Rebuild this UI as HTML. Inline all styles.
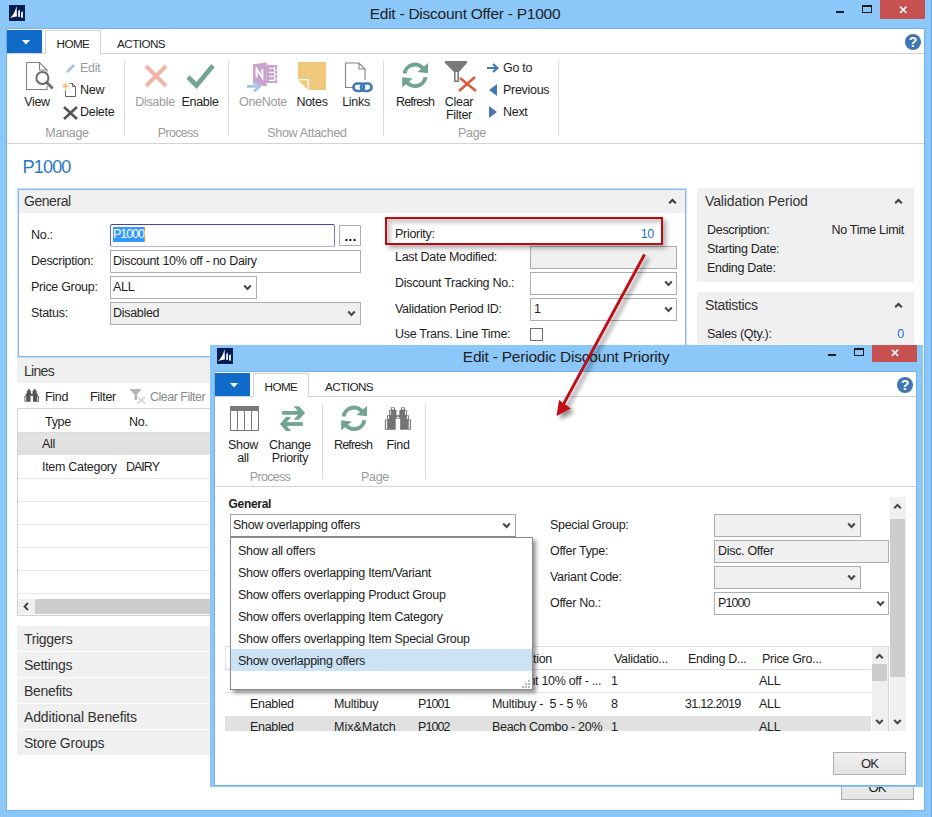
<!DOCTYPE html>
<html lang="en">
<head>
<meta charset="utf-8">
<title>Edit - Discount Offer - P1000</title>
<style>
html,body{margin:0;padding:0;}
body{width:932px;height:817px;overflow:hidden;background:#8bc7f9;position:relative;font-family:"Liberation Sans",sans-serif;font-size:12px;color:#1e1e1e;}
.a{position:absolute;}
.t{position:absolute;white-space:nowrap;line-height:16px;font-size:12.5px;color:#1e1e1e;letter-spacing:-0.3px;}
.c{transform:translateX(-50%);text-align:center;}
.r{transform:translateX(-100%);}
.g{color:#9a9a9a;}
.h{font-size:14px;color:#333;letter-spacing:-0.45px;}
.tb{font-size:11.7px;letter-spacing:-0.55px;}
.bl{color:#2b78bf;}
.bv{color:#1e6ec8;}
.in{position:absolute;box-sizing:border-box;border:1px solid #abadb3;background:#fff;}
.ro{background:#f0f0f0;}
.sep{position:absolute;width:1px;background:#d9d9d9;}
.hl{position:absolute;height:1px;background:#d4d4d4;}
.pn{position:absolute;background:#f0f0f0;}
svg{position:absolute;overflow:visible;}
</style>
</head>
<body>
<div class="a" style="left:931px;top:0;width:1px;height:817px;background:#6aa6de;"></div>
<div class="a" style="left:6px;top:28px;width:919px;height:783px;background:#74b1e8;"></div>
<div class="a" style="left:7px;top:29px;width:917px;height:781px;background:#fff;"></div>

<!-- outer_title -->
<!-- outer title bar -->
<svg style="left:9px;top:5px" width="16" height="16" viewBox="0 0 16 16"><rect width="16" height="16" fill="#001d50"/><path d="M7.6 0.9 L7.9 11.5 Q4.5 11.6 1 13 Q5.6 9 7.6 0.9 Z M9.2 6.2 Q10 5 10.8 4.4 L10.9 11.9 L9.1 11.7 Z M12.1 7.6 Q13 6.6 13.8 6 L13.9 12.8 L12 12.5 Z" fill="#fff"/></svg>
<div class="t c" style="left:465px;top:5px;font-size:15.5px;line-height:18px;letter-spacing:-0.25px;color:#1e1e1e;">Edit - Discount Offer - P1000</div>
<div class="a" style="left:836px;top:11px;width:8px;height:2px;background:#1a1a1a;"></div>
<div class="a" style="left:862px;top:5px;width:10px;height:8px;box-sizing:border-box;border:1px solid #1a1a1a;border-top-width:2px;"></div>
<div class="a" style="left:880px;top:0;width:45px;height:19px;background:#c75050;"></div>
<svg style="left:898.7px;top:5.6px" width="8.5" height="7.6" viewBox="0 0 9 9"><path d="M0.7 0.7 L8.3 8.3 M8.3 0.7 L0.7 8.3" stroke="#fff" stroke-width="1.9" fill="none"/></svg>
<!-- tabs -->
<div class="a" style="left:7px;top:30px;width:35px;height:23px;background:#106ac7;"></div>
<svg style="left:22px;top:40px" width="8" height="4.6" viewBox="0 0 9 5"><path d="M0 0 L9 0 L4.5 5 Z" fill="#fff"/></svg>
<div class="hl" style="left:7px;top:53px;width:917px;"></div>
<div class="a" style="left:45px;top:30px;width:56px;height:24px;box-sizing:border-box;border:1px solid #d4d4d4;border-bottom:none;background:#fff;"></div>
<div class="t tb" style="left:56.5px;top:35.5px;">HOME</div>
<div class="t tb" style="left:117px;top:35.5px;">ACTIONS</div>
<svg style="left:905px;top:34px" width="16" height="16" viewBox="0 0 16 16"><circle cx="8" cy="8" r="8" fill="#3f76b3"/><text x="8" y="12.6" font-family="Liberation Sans,sans-serif" font-weight="bold" font-size="14" fill="#fff" text-anchor="middle">?</text></svg>

<!-- outer_ribbon -->
<div class="hl" style="left:7px;top:143px;width:917px;"></div>
<!-- View -->
<svg style="left:25px;top:62px" width="29" height="29" viewBox="0 0 29 29"><path d="M1.5 0.5 H14.5 L22 8 V10.5 M14.5 0.5 V8 H22 M1.5 0.5 V27.5 H22 V24" fill="none" stroke="#828282" stroke-width="1.1"/><circle cx="17.4" cy="16" r="6" fill="#fff" stroke="#6a6a6a" stroke-width="2"/><path d="M21.8 20.6 L27.6 26.4" stroke="#6a6a6a" stroke-width="2.8" fill="none"/></svg>
<div class="t c" style="left:37px;top:94px;">View</div>
<!-- Edit / New / Delete -->
<svg style="left:65px;top:63px" width="11" height="11" viewBox="0 0 11 11"><path d="M1 10 L2 7 L8 1 L10 3 L4 9 Z" fill="#a9c4e4"/></svg>
<div class="t g" style="left:80px;top:60px;">Edit</div>
<svg style="left:62px;top:82px" width="15" height="16" viewBox="0 0 15 16"><path d="M7.5 1.5 H10.5 L13.5 4.5 V14.5 H3.5 V8.5 M10.5 1.5 V4.5 H13.5" fill="none" stroke="#666" stroke-width="1"/><path d="M3.5 0.5 V7.5 M0 4 H7 M1.1 1.6 L5.9 6.4 M5.9 1.6 L1.1 6.4" stroke="#eaa94b" stroke-width="0.8"/></svg>
<div class="t" style="left:80px;top:82px;">New</div>
<svg style="left:62.5px;top:105.5px" width="15" height="14" viewBox="0 0 15 14"><path d="M1 1 L14 13 M14 1 L1 13" stroke="#555" stroke-width="2.6" fill="none"/></svg>
<div class="t" style="left:80px;top:104px;">Delete</div>
<div class="t c g" style="left:67px;top:125px;">Manage</div>
<div class="sep" style="left:124px;top:61px;height:75px;"></div>
<!-- Disable / Enable -->
<svg style="left:144px;top:64px" width="24" height="24" viewBox="0 0 24 24"><path d="M2 2 L22 22 M22 2 L2 22" stroke="#f0b3a6" stroke-width="4" fill="none"/></svg>
<div class="t c g" style="left:155px;top:94px;">Disable</div>
<svg style="left:186px;top:63px" width="29" height="26" viewBox="0 0 29 26"><path d="M2 14 L10.5 22.5 L27 2.5" stroke="#71a491" stroke-width="4.6" fill="none"/></svg>
<div class="t c" style="left:200px;top:94px;">Enable</div>
<div class="t c g" style="left:178px;top:125px;letter-spacing:-0.7px;">Process</div>
<div class="sep" style="left:228px;top:61px;height:75px;"></div>
<!-- OneNote / Notes / Links -->
<svg style="left:247px;top:61px" width="32" height="31" viewBox="0 0 32 31"><path d="M19.4 4 H30.2 V22 H19.4 Z" fill="#c9a3cc"/><path d="M22 7.4 H27 M22 11.4 H27 M22 15.4 H27 M22 19.4 H27" stroke="#fff" stroke-width="1.3"/><path d="M27.6 5.5 V20.5" stroke="#fff" stroke-width="1"/><path d="M28.2 9 H30.4 M28.2 13.4 H30.4 M28.2 17.8 H30.4" stroke="#fff" stroke-width="1"/><path d="M6 3.3 L19.6 1.2 V25.4 L6 23 Z" fill="#c9a3cc"/><path d="M9.6 16.6 V8 L15.4 16.6 V8" stroke="#fff" stroke-width="1.9" fill="none"/><path d="M0 25.4 H10.5 M7 20.6 L12.6 25.4 L7 30.2" stroke="#a9c4e2" stroke-width="2.6" fill="none"/></svg>
<div class="t c g" style="left:263px;top:94px;">OneNote</div>
<svg style="left:298px;top:62px" width="28" height="28" viewBox="0 0 28 28"><path d="M0 0 H28 V28 H10 L0 18 Z" fill="#f0c87c"/><path d="M0 17.7 H10.3 V28" fill="none" stroke="#fff" stroke-width="1.3"/></svg>
<div class="t c" style="left:312px;top:94px;">Notes</div>
<svg style="left:344px;top:62px" width="30" height="30" viewBox="0 0 30 30"><path d="M1.5 1 L15 1 L21 7 L21 18 M15 1 L15 7 L21 7 M1.5 1 L1.5 25.5 L9 25.5" fill="none" stroke="#828282" stroke-width="1.1"/><rect x="9.5" y="21.5" width="10.5" height="7.5" rx="3.7" fill="none" stroke="#3f7ab8" stroke-width="2.7"/><rect x="17" y="21.5" width="10.5" height="7.5" rx="3.7" fill="none" stroke="#3f7ab8" stroke-width="2.7"/></svg>
<div class="t c" style="left:356px;top:94px;">Links</div>
<div class="t c g" style="left:307px;top:125px;">Show Attached</div>
<div class="sep" style="left:383px;top:61px;height:75px;"></div>
<!-- Refresh -->
<svg style="left:401px;top:62px" width="28" height="27" viewBox="0 0 28 27"><path d="M3.5 11.5 A10.5 10.5 0 0 1 23.1 8.05" fill="none" stroke="#71a491" stroke-width="3.9"/><path d="M27 1 V11.3 L16.5 9.9 Z" fill="#71a491"/><path d="M24.5 15.1 A10.5 10.5 0 0 1 4.9 18.55" fill="none" stroke="#71a491" stroke-width="3.9"/><path d="M1.2 15.2 V25.5 L11.8 16.6 Z" fill="#71a491"/></svg>
<div class="t c" style="left:415px;top:94px;letter-spacing:-0.8px;">Refresh</div>
<!-- Clear filter -->
<svg style="left:445px;top:61px" width="32" height="31" viewBox="0 0 32 31"><path d="M0 0 L22 0 L22 2 L14 11 L14 21 L9 21 L9 11 L0 2 Z" fill="#7a7a7a"/><path d="M10.6 11 L12.4 11 L12.4 19.5 L10.6 19.5 Z" fill="#fff"/><path d="M15 17 L31 30 M30 16 L14 30" stroke="#db5b40" stroke-width="2.6" fill="none"/></svg>
<div class="t c" style="left:459px;top:94px;line-height:13px;top:96px;">Clear<br>Filter</div>
<!-- Go to / Previous / Next -->
<svg style="left:487px;top:63px" width="12" height="10" viewBox="0 0 12 10"><path d="M0 5 L10 5 M6 1 L10.5 5 L6 9" stroke="#4279b6" stroke-width="2.2" fill="none"/></svg>
<div class="t" style="left:503px;top:60px;">Go to</div>
<svg style="left:489px;top:84px" width="8" height="12" viewBox="0 0 8 12"><path d="M8 0 L8 12 L0 6 Z" fill="#4279b6"/></svg>
<div class="t" style="left:503px;top:82px;">Previous</div>
<svg style="left:489px;top:106px" width="8" height="12" viewBox="0 0 8 12"><path d="M0 0 L0 12 L8 6 Z" fill="#4279b6"/></svg>
<div class="t" style="left:503px;top:104px;">Next</div>
<div class="t c g" style="left:472px;top:125px;">Page</div>
<div class="sep" style="left:558px;top:61px;height:75px;"></div>

<!-- outer_body -->
<div class="t bl" style="left:22.5px;top:156px;font-size:18px;line-height:22px;letter-spacing:-0.8px;">P1000</div>
<!-- General fasttab -->
<div class="a" style="left:18px;top:189px;width:668px;height:168px;box-sizing:border-box;border:1px solid #8cb4f8;background:#fff;box-shadow:0 0 0 1px #c6dcfb;"></div>
<div class="pn" style="left:19px;top:190px;width:666px;height:23px;"></div>
<div class="t h" style="left:24px;top:192px;line-height:18px;">General</div>
<svg style="left:668px;top:198px" width="9" height="6" viewBox="0 0 9 6"><path d="M1.2 5.3 L4.5 2 L7.8 5.3" stroke="#3a3a3a" stroke-width="2.1" fill="none"/></svg>
<!-- left column -->
<div class="t" style="left:31px;top:227px;">No.:</div>
<div class="t" style="left:31px;top:253px;">Description:</div>
<div class="t" style="left:31px;top:279px;">Price Group:</div>
<div class="t" style="left:31px;top:305px;">Status:</div>
<div class="in" style="left:110px;top:224px;width:225px;height:23px;border-color:#4644a4 #7c7ac4 #b4b2e2 #6462b4;border-radius:2px;"></div>
<div class="t" style="left:113px;top:227px;background:#3399ff;color:#fff;height:15px;line-height:15px;letter-spacing:-1.05px;border-right:1px solid #e8902a;">P1000</div>
<div class="in" style="left:339px;top:225px;width:22px;height:21px;"></div>
<div class="t" style="left:344.5px;top:229px;font-weight:bold;letter-spacing:0.5px;color:#000;font-size:13px;">...</div>
<div class="in" style="left:110px;top:250px;width:251px;height:23px;"></div>
<div class="t" style="left:113px;top:253px;">Discount 10% off - no Dairy</div>
<div class="in" style="left:110px;top:276px;width:147px;height:23px;"></div>
<div class="t" style="left:113px;top:279px;">ALL</div>
<svg style="left:243px;top:284px" width="9" height="7" viewBox="0 0 9 7"><path d="M1.2 1.6 L4.5 5 L7.8 1.6" stroke="#484848" stroke-width="2.1" fill="none"/></svg>
<div class="in ro" style="left:110px;top:302px;width:251px;height:23px;"></div>
<div class="t" style="left:113px;top:305px;">Disabled</div>
<svg style="left:347px;top:310px" width="9" height="7" viewBox="0 0 9 7"><path d="M1.2 1.6 L4.5 5 L7.8 1.6" stroke="#484848" stroke-width="2.1" fill="none"/></svg>
<!-- right column -->
<div class="t" style="left:395px;top:226px;">Priority:</div>
<div class="t r bv" style="left:654px;top:226px;">10</div>
<div class="t" style="left:395px;top:249px;">Last Date Modified:</div>
<div class="t" style="left:395px;top:275px;">Discount Tracking No.:</div>
<div class="t" style="left:395px;top:301px;">Validation Period ID:</div>
<div class="t" style="left:395px;top:326px;">Use Trans. Line Time:</div>
<div class="in ro" style="left:530px;top:246px;width:147px;height:23px;"></div>
<div class="in" style="left:530px;top:272px;width:147px;height:23px;"></div>
<svg style="left:664px;top:280px" width="9" height="7" viewBox="0 0 9 7"><path d="M1.2 1.6 L4.5 5 L7.8 1.6" stroke="#484848" stroke-width="2.1" fill="none"/></svg>
<div class="in" style="left:530px;top:298px;width:147px;height:23px;"></div>
<div class="t" style="left:534px;top:301px;">1</div>
<svg style="left:664px;top:306px" width="9" height="7" viewBox="0 0 9 7"><path d="M1.2 1.6 L4.5 5 L7.8 1.6" stroke="#484848" stroke-width="2.1" fill="none"/></svg>
<div class="in" style="left:530px;top:328px;width:13px;height:13px;border-color:#6e6e6e;"></div>
<!-- red highlight box -->
<div class="a" style="left:385px;top:217px;width:278px;height:28px;box-sizing:border-box;border:2px solid #be0a10;box-shadow:3px 3px 5px rgba(0,0,0,0.33), inset 4px 4px 4px rgba(0,0,0,0.2);"></div>

<!-- outer_lines -->
<div class="pn" style="left:17px;top:358px;width:669px;height:25px;"></div>
<div class="t h" style="left:24px;top:362px;line-height:18px;letter-spacing:-0.7px;">Lines</div>
<!-- toolbar -->
<svg style="left:23.8px;top:389px" width="15.6" height="13" viewBox="0 0 28 23"><path d="M6.9 0.2 H10.9 V3.1 H12.5 V8.2 H15.35 V3.1 H16.95 V0.2 H20.95 V3.1 H22.9 V8.2 H24.85 V12.4 H26.95 V22.7 H16.15 V11.75 H11.7 V22.7 H0.9 V12.4 H3 V8.2 H4.95 V3.1 H6.9 Z" fill="#555"/><path d="M2.4 13.2 H4 V21.9 H2.4 Z M23.85 13.2 H25.45 V21.9 H23.85 Z" fill="#fff"/></svg>
<div class="t" style="left:45px;top:389px;">Find</div>
<div class="t" style="left:90px;top:389px;">Filter</div>
<svg style="left:130px;top:389px" width="16" height="15" viewBox="0 0 16 15"><path d="M0 0 L11 0 L11 1 L7 5.5 L7 11 L4.5 11 L4.5 5.5 L0 1 Z" fill="#b5b5b5"/><path d="M7.5 8 L15 14.5 M15 8 L7.5 14.5" stroke="#c9c9c9" stroke-width="1.2" fill="none"/></svg>
<div class="t g" style="left:150px;top:389px;color:#8a8a8a;letter-spacing:-0.5px;">Clear Filter</div>
<!-- grid -->
<div class="a" style="left:17px;top:408px;width:669px;height:208px;box-sizing:border-box;border:1px solid #d0d0d0;background:#fff;"></div>
<div class="t" style="left:45px;top:414px;">Type</div>
<div class="t" style="left:129px;top:414px;">No.</div>
<div class="a" style="left:18px;top:432px;width:667px;height:23px;background:#e1e1e1;"></div>
<div class="t" style="left:42px;top:436px;">All</div>
<div class="t" style="left:42px;top:459px;">Item Category</div>
<div class="t" style="left:126px;top:459px;letter-spacing:-1px;">DAIRY</div>
<div class="hl" style="left:18px;top:432px;width:667px;background:#dcdcdc;"></div>
<div class="hl" style="left:18px;top:478px;width:667px;background:#e6e6e6;"></div>
<div class="hl" style="left:18px;top:501px;width:667px;background:#e6e6e6;"></div>
<div class="hl" style="left:18px;top:524px;width:667px;background:#e6e6e6;"></div>
<div class="hl" style="left:18px;top:547px;width:667px;background:#e6e6e6;"></div>
<div class="hl" style="left:18px;top:570px;width:667px;background:#e6e6e6;"></div>
<div class="hl" style="left:18px;top:593px;width:667px;background:#e6e6e6;"></div>
<!-- h scrollbar -->
<div class="a" style="left:18px;top:599px;width:667px;height:15px;background:#f0f0f0;"></div>
<div class="a" style="left:35px;top:599px;width:300px;height:15px;background:#cdcdcd;"></div>
<svg style="left:23px;top:602px" width="6" height="9" viewBox="0 0 6 9"><path d="M5 1 L1.5 4.5 L5 8" stroke="#444" stroke-width="1.8" fill="none"/></svg>
<!-- collapsed fasttabs -->
<div class="pn" style="left:17px;top:626px;width:669px;height:25px;"></div>
<div class="t h" style="left:24px;top:630px;line-height:18px;letter-spacing:-0.31px;">Triggers</div>
<div class="pn" style="left:17px;top:652px;width:669px;height:25px;"></div>
<div class="t h" style="left:24px;top:656px;line-height:18px;letter-spacing:-0.3px;">Settings</div>
<div class="pn" style="left:17px;top:678px;width:669px;height:25px;"></div>
<div class="t h" style="left:24px;top:682px;line-height:18px;letter-spacing:-0.3px;">Benefits</div>
<div class="pn" style="left:17px;top:704px;width:669px;height:25px;"></div>
<div class="t h" style="left:24px;top:708px;line-height:18px;letter-spacing:-0.16px;">Additional Benefits</div>
<div class="pn" style="left:17px;top:730px;width:669px;height:25px;"></div>
<div class="t h" style="left:24px;top:734px;line-height:18px;letter-spacing:-0.25px;">Store Groups</div>

<!-- outer_right -->
<div class="pn" style="left:697px;top:188px;width:217px;height:94px;"></div>
<div class="t h" style="left:705px;top:192px;line-height:18px;letter-spacing:-0.12px;">Validation Period</div>
<svg style="left:894px;top:198px" width="9" height="6" viewBox="0 0 9 6"><path d="M1.2 5.3 L4.5 2 L7.8 5.3" stroke="#3a3a3a" stroke-width="2.1" fill="none"/></svg>
<div class="t" style="left:707px;top:222px;">Description:</div>
<div class="t r" style="left:904px;top:222px;">No Time Limit</div>
<div class="t" style="left:707px;top:241px;">Starting Date:</div>
<div class="t" style="left:707px;top:260px;">Ending Date:</div>
<div class="pn" style="left:697px;top:292px;width:217px;height:60px;"></div>
<div class="t h" style="left:705px;top:296px;line-height:18px;letter-spacing:-0.33px;">Statistics</div>
<svg style="left:894px;top:302px" width="9" height="6" viewBox="0 0 9 6"><path d="M1.2 5.3 L4.5 2 L7.8 5.3" stroke="#3a3a3a" stroke-width="2.1" fill="none"/></svg>
<div class="t" style="left:707px;top:326px;">Sales (Qty.):</div>
<div class="t r bv" style="left:904px;top:326px;">0</div>
<!-- outer OK button -->
<div class="a" style="left:841px;top:777px;width:73px;height:23px;box-sizing:border-box;border:1px solid #adadad;background:linear-gradient(#f0f0f0,#e4e4e4);"></div>
<div class="t c" style="left:877px;top:780px;font-size:13px;letter-spacing:-0.9px;">OK</div>

<!-- inner_frame -->
<div class="a" style="left:210px;top:345px;width:713px;height:442px;background:#8bc7f9;"></div>
<div class="a" style="left:214px;top:371px;width:703px;height:415px;background:#74b1e8;"></div>
<div class="a" style="left:215px;top:372px;width:701px;height:413px;background:#fff;"></div>

<!-- inner_title -->
<svg style="left:217px;top:348px" width="16" height="16" viewBox="0 0 16 16"><rect width="16" height="16" fill="#001d50"/><path d="M7.6 0.9 L7.9 11.5 Q4.5 11.6 1 13 Q5.6 9 7.6 0.9 Z M9.2 6.2 Q10 5 10.8 4.4 L10.9 11.9 L9.1 11.7 Z M12.1 7.6 Q13 6.6 13.8 6 L13.9 12.8 L12 12.5 Z" fill="#fff"/></svg>
<div class="t c" style="left:566px;top:348px;font-size:15.5px;line-height:18px;letter-spacing:-0.22px;color:#1e1e1e;">Edit - Periodic Discount Priority</div>
<div class="a" style="left:828px;top:354px;width:8px;height:2px;background:#1a1a1a;"></div>
<div class="a" style="left:854px;top:348px;width:10px;height:8px;box-sizing:border-box;border:1px solid #1a1a1a;border-top-width:2px;"></div>
<div class="a" style="left:872px;top:345px;width:45px;height:17px;background:#c75050;"></div>
<svg style="left:890.5px;top:348.5px" width="8" height="7.5" viewBox="0 0 9 9"><path d="M0.7 0.7 L8.3 8.3 M8.3 0.7 L0.7 8.3" stroke="#fff" stroke-width="1.9" fill="none"/></svg>
<!-- tabs -->
<div class="a" style="left:215px;top:373px;width:35px;height:23px;background:#106ac7;"></div>
<svg style="left:230px;top:383px" width="8" height="4.6" viewBox="0 0 9 5"><path d="M0 0 L9 0 L4.5 5 Z" fill="#fff"/></svg>
<div class="hl" style="left:215px;top:396px;width:701px;"></div>
<div class="a" style="left:253px;top:373px;width:56px;height:24px;box-sizing:border-box;border:1px solid #d4d4d4;border-bottom:none;background:#fff;"></div>
<div class="t tb" style="left:264.5px;top:378.5px;">HOME</div>
<div class="t tb" style="left:325px;top:378.5px;">ACTIONS</div>
<svg style="left:897px;top:377px" width="16" height="16" viewBox="0 0 16 16"><circle cx="8" cy="8" r="8" fill="#3f76b3"/><text x="8" y="12.6" font-family="Liberation Sans,sans-serif" font-weight="bold" font-size="14" fill="#fff" text-anchor="middle">?</text></svg>

<!-- inner_ribbon -->
<div class="hl" style="left:215px;top:486px;width:701px;"></div>
<!-- Show all -->
<svg style="left:230px;top:406px" width="29" height="25" viewBox="0 0 29 25"><rect x="0.5" y="0.5" width="28" height="24" fill="#fff" stroke="#777" stroke-width="1"/><rect x="0" y="0" width="29" height="5" fill="#7a7a7a"/><path d="M7.5 5 L7.5 24 M14.5 5 L14.5 24 M21.5 5 L21.5 24" stroke="#777" stroke-width="1"/></svg>
<div class="t c" style="left:243px;top:439px;line-height:13px;">Show<br>all</div>
<!-- Change priority -->
<svg style="left:270px;top:400px" width="40" height="34" viewBox="0 0 40 34"><g fill="#71a491"><path d="M12.1 11 H30 V14.75 H12.1 Z"/><path d="M23.6 6.2 H29 L35.1 12.9 L29 19.7 H23.6 L29.7 12.9 Z"/><path d="M14 22.1 H32.8 V25.9 H14 Z"/><path d="M21.2 17 H16 L9.9 24 L16 31 H21.2 L15.1 24 Z"/></g></svg>
<div class="t c" style="left:290px;top:439px;line-height:13px;">Change<br>Priority</div>
<div class="t c g" style="left:270px;top:469px;letter-spacing:-0.7px;">Process</div>
<div class="sep" style="left:322px;top:404px;height:75px;"></div>
<!-- Refresh -->
<svg style="left:340px;top:405px" width="28" height="27" viewBox="0 0 28 27"><path d="M3.5 11.5 A10.5 10.5 0 0 1 23.1 8.05" fill="none" stroke="#71a491" stroke-width="3.9"/><path d="M27 1 V11.3 L16.5 9.9 Z" fill="#71a491"/><path d="M24.5 15.1 A10.5 10.5 0 0 1 4.9 18.55" fill="none" stroke="#71a491" stroke-width="3.9"/><path d="M1.2 15.2 V25.5 L11.8 16.6 Z" fill="#71a491"/></svg>
<div class="t c" style="left:353px;top:437px;letter-spacing:-0.8px;">Refresh</div>
<!-- Find -->
<svg style="left:384px;top:407px" width="28" height="23" viewBox="0 0 28 23"><path d="M6.9 0.2 H10.9 V3.1 H12.5 V8.2 H15.35 V3.1 H16.95 V0.2 H20.95 V3.1 H22.9 V8.2 H24.85 V12.4 H26.95 V22.7 H16.15 V11.75 H11.7 V22.7 H0.9 V12.4 H3 V8.2 H4.95 V3.1 H6.9 Z" fill="#747474"/><path d="M12.7 9.8 H15.1 V11.2 H12.7 Z M2 13.2 H3.1 V21.9 H2 Z M24.75 13.2 H25.85 V21.9 H24.75 Z M4 8.8 H5 V12 H4 Z M22.85 8.8 H23.85 V12 H22.85 Z M5.8 3.7 H6.8 V7.8 H5.8 Z M21.05 3.7 H22.05 V7.8 H21.05 Z M7.9 0.8 H9.9 V2.6 H7.9 Z M17.95 0.8 H19.95 V2.6 H17.95 Z" fill="#fff"/></svg>
<div class="t c" style="left:398px;top:437px;">Find</div>
<div class="t c g" style="left:375px;top:469px;">Page</div>
<div class="sep" style="left:425px;top:404px;height:75px;"></div>

<!-- inner_body -->
<div class="t" style="left:228.5px;top:496px;font-weight:bold;font-size:12px;">General</div>
<div class="in" style="left:230px;top:514px;width:286px;height:23px;border-color:#a3a5ab #a3a5ab #8c8c8c #a3a5ab;"></div>
<div class="t" style="left:233px;top:517px;">Show overlapping offers</div>
<svg style="left:502px;top:522px" width="9" height="7" viewBox="0 0 9 7"><path d="M1.2 1.6 L4.5 5 L7.8 1.6" stroke="#484848" stroke-width="2.1" fill="none"/></svg>
<div class="t" style="left:550px;top:517px;">Special Group:</div>
<div class="t" style="left:550px;top:543px;">Offer Type:</div>
<div class="t" style="left:550px;top:569px;">Variant Code:</div>
<div class="t" style="left:550px;top:595px;">Offer No.:</div>
<div class="in ro" style="left:714px;top:514px;width:147px;height:23px;"></div>
<svg style="left:847px;top:522px" width="9" height="7" viewBox="0 0 9 7"><path d="M1.2 1.6 L4.5 5 L7.8 1.6" stroke="#484848" stroke-width="2.1" fill="none"/></svg>
<div class="in ro" style="left:714px;top:540px;width:175px;height:23px;"></div>
<div class="t" style="left:718px;top:543px;">Disc. Offer</div>
<div class="in ro" style="left:714px;top:566px;width:147px;height:23px;"></div>
<svg style="left:847px;top:574px" width="9" height="7" viewBox="0 0 9 7"><path d="M1.2 1.6 L4.5 5 L7.8 1.6" stroke="#484848" stroke-width="2.1" fill="none"/></svg>
<div class="in" style="left:714px;top:592px;width:175px;height:23px;"></div>
<div class="t" style="left:718px;top:595px;letter-spacing:-0.9px;">P1000</div>
<svg style="left:876px;top:600px" width="9" height="7" viewBox="0 0 9 7"><path d="M1.2 1.6 L4.5 5 L7.8 1.6" stroke="#484848" stroke-width="2.1" fill="none"/></svg>
<!-- content v scrollbar -->
<div class="a" style="left:890px;top:497px;width:16px;height:234px;background:#f0f0f0;"></div>
<div class="a" style="left:890px;top:519px;width:15px;height:158px;background:#cdcdcd;"></div>
<svg style="left:893px;top:503px" width="9" height="6" viewBox="0 0 9 6"><path d="M1.2 5.3 L4.5 2 L7.8 5.3" stroke="#484848" stroke-width="2.1" fill="none"/></svg>
<svg style="left:893px;top:719px" width="9" height="6" viewBox="0 0 9 6"><path d="M1.2 0.9 L4.5 4.2 L7.8 0.9" stroke="#484848" stroke-width="2.1" fill="none"/></svg>
<!-- OK button -->
<div class="a" style="left:833px;top:752px;width:73px;height:23px;box-sizing:border-box;border:1px solid #adadad;background:linear-gradient(#f0f0f0,#e4e4e4);"></div>
<div class="t c" style="left:869.5px;top:755.5px;font-size:13px;letter-spacing:-0.9px;">OK</div>

<!-- inner_grid -->
<div class="a" style="left:225px;top:647px;width:646px;height:84px;background:#fff;"></div>
<div class="hl" style="left:225px;top:646px;width:663px;background:#e0e0e0;"></div>
<div class="a" style="left:225px;top:646px;width:1px;height:24px;background:#e0e0e0;"></div>
<div class="hl" style="left:225px;top:669px;width:646px;background:#dcdcdc;"></div>
<div class="hl" style="left:225px;top:692px;width:646px;background:#e6e6e6;"></div>
<div class="a" style="left:225px;top:715.5px;width:646px;height:15.5px;background:#e1e1e1;"></div>
<div class="t" style="left:533px;top:651px;">tion</div>
<div class="t" style="left:614px;top:651px;">Validatio...</div>
<div class="t" style="left:688px;top:651px;">Ending D...</div>
<div class="t" style="left:762px;top:651px;">Price Gro...</div>
<div class="t" style="left:492px;top:673px;">Discount 10% off - ...</div>
<div class="t" style="left:611px;top:673px;">1</div>
<div class="t" style="left:759px;top:673px;">ALL</div>
<div class="t" style="left:250px;top:696px;">Enabled</div>
<div class="t" style="left:334px;top:696px;">Multibuy</div>
<div class="t" style="left:418px;top:696px;letter-spacing:-0.9px;">P1001</div>
<div class="t" style="left:492px;top:696px;">Multibuy -&nbsp; 5 - 5 %</div>
<div class="t" style="left:611px;top:696px;">8</div>
<div class="t" style="left:685px;top:696px;letter-spacing:-0.7px;">31.12.2019</div>
<div class="t" style="left:759px;top:696px;">ALL</div>
<div class="a" style="left:225px;top:716px;width:646px;height:15px;overflow:hidden;">
<div class="t" style="left:25px;top:3px;">Enabled</div>
<div class="t" style="left:109px;top:3px;letter-spacing:0;">Mix&amp;Match</div>
<div class="t" style="left:193px;top:3px;letter-spacing:-0.9px;">P1002</div>
<div class="t" style="left:267px;top:3px;">Beach Combo - 20%</div>
<div class="t" style="left:386px;top:3px;">1</div>
<div class="t" style="left:534px;top:3px;">ALL</div>
</div>
<!-- grid v scrollbar -->
<div class="a" style="left:872px;top:647px;width:16px;height:84px;background:#f0f0f0;"></div>
<div class="a" style="left:872px;top:664px;width:15px;height:17px;background:#cdcdcd;"></div>
<div class="a" style="left:888px;top:646px;width:1px;height:85px;background:#d6d6d6;"></div>
<svg style="left:875px;top:653px" width="9" height="6" viewBox="0 0 9 6"><path d="M1.2 5.3 L4.5 2 L7.8 5.3" stroke="#484848" stroke-width="2.1" fill="none"/></svg>
<svg style="left:875px;top:719px" width="9" height="6" viewBox="0 0 9 6"><path d="M1.2 0.9 L4.5 4.2 L7.8 0.9" stroke="#484848" stroke-width="2.1" fill="none"/></svg>

<!-- inner_dropdown -->
<div class="a" style="left:230px;top:537px;width:303px;height:153px;box-sizing:border-box;border:1px solid #8a8a8a;background:#fff;box-shadow:3px 3px 4px rgba(0,0,0,0.42);"></div>
<div class="a" style="left:231px;top:649px;width:301px;height:22px;background:#cbe3f5;"></div>
<div class="t" style="left:238px;top:543px;">Show all offers</div>
<div class="t" style="left:238px;top:565px;">Show offers overlapping Item/Variant</div>
<div class="t" style="left:238px;top:587px;">Show offers overlapping Product Group</div>
<div class="t" style="left:238px;top:609px;">Show offers overlapping Item Category</div>
<div class="t" style="left:238px;top:631px;">Show offers overlapping Item Special Group</div>
<div class="t" style="left:238px;top:653px;">Show overlapping offers</div>
<svg style="left:522px;top:680px" width="8" height="8" viewBox="0 0 8 8"><path d="M6 0 L8 0 L8 2 L6 2 Z M3 3 L5 3 L5 5 L3 5 Z M6 3 L8 3 L8 5 L6 5 Z M0 6 L2 6 L2 8 L0 8 Z M3 6 L5 6 L5 8 L3 8 Z M6 6 L8 6 L8 8 L6 8 Z" fill="#b8b8b8"/></svg>

<!-- arrow -->
<svg style="left:0;top:0;pointer-events:none" width="932" height="817" viewBox="0 0 932 817">
<defs><filter id="sh" x="-20%" y="-20%" width="150%" height="150%"><feDropShadow dx="3.5" dy="3.5" stdDeviation="2" flood-color="#000" flood-opacity="0.45"/></filter></defs>
<g filter="url(#sh)"><path d="M644.5 254.5 L563 405" stroke="#c00a12" stroke-width="2.8" fill="none"/><path d="M556.5 416 L559 400 L570.8 408.6 Z" fill="#c00a12"/></g>
</svg>

</body>
</html>
